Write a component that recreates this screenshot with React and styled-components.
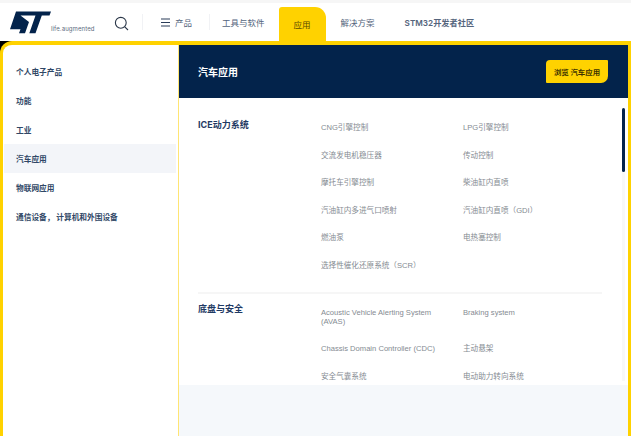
import React from 'react'
import styled, { createGlobalStyle } from 'styled-components'

const FONT = '"Inter", "Liberation Sans", "Noto Sans CJK SC", sans-serif'
const LINK_FONT = '"Liberation Sans", "Noto Sans CJK SC", sans-serif'

const GlobalStyle = createGlobalStyle`
  html, body {
    margin: 0;
    height: 100%;
    overflow: hidden;
    background: #fff;
    font-family: ${FONT};
  }
`

const Page = styled.div`
  width: 631px;
  height: 436px;
  display: flex;
  flex-direction: column;
  background: #000;
`

const TopBar = styled.header`
  height: 41px;
  box-sizing: border-box;
  border-top: 3px solid #f6f6f6;
  background: #fff;
  display: flex;
  align-items: stretch;
`

const Brand = styled.div`
  width: 142px;
  box-sizing: border-box;
  padding-left: 10px;
  display: flex;
  align-items: center;
`

const Tagline = styled.span`
  font-size: 6px;
  color: #5d6b80;
  margin: 13px 0 0 0;
  width: 44px;
  letter-spacing: 0.1px;
  white-space: nowrap;
`

const SearchBtn = styled.span`
  margin: 3px 0 0 19px;
  display: flex;
  color: #2a3648;
`

const Nav = styled.nav`
  display: flex;
  align-items: stretch;
`

const NavItem = styled.div`
  display: flex;
  align-items: center;
  gap: 5px;
  font-size: ${p => (p.$bold ? '8.2px' : '8.5px')};
  color: ${p => (p.$active ? '#5b4a00' : '#54647c')};
  background: ${p => (p.$active ? '#ffd200' : 'transparent')};
  margin-top: ${p => (p.$active ? '4px' : '0')};
  border-radius: ${p => (p.$active ? '3px 11px 0 0' : '0')};
  padding: ${p => p.$pad};
  font-weight: ${p => (p.$bold ? 600 : 400)};
  white-space: nowrap;
`

const NavDivider = styled.span`
  width: 1px;
  height: 16px;
  align-self: center;
  background: #f1f2f5;
`

const Panel = styled.div`
  flex: 1;
  min-height: 0;
  display: flex;
  box-sizing: border-box;
  background: #fff;
  border: 3px solid #ffd200;
  border-top-width: 4px;
  border-bottom: 0;
  border-radius: 12px 0 0 0;
`

const Side = styled.aside`
  width: 176px;
  flex-shrink: 0;
  box-sizing: border-box;
  padding: 12px 2px 0 1px;
  border-right: 1px solid #ffe574;
`

const SideItem = styled.div`
  height: 29px;
  box-sizing: border-box;
  padding-left: 12px;
  display: flex;
  align-items: center;
  font-size: 7.7px;
  font-weight: 700;
  color: #304766;
  background: ${p => (p.$active ? '#f3f5f9' : 'transparent')};
`

const Main = styled.main`
  flex: 1;
  min-width: 0;
  display: flex;
  flex-direction: column;
`

const Banner = styled.div`
  height: 53px;
  flex-shrink: 0;
  box-sizing: border-box;
  background: #03234b;
  display: flex;
  align-items: center;
  justify-content: space-between;
  padding: 0 20px 0 19px;
`

const BannerTitle = styled.h2`
  margin: 0;
  font-size: 10px;
  font-weight: 700;
  color: #fff;
`

const BrowseBtn = styled.button`
  height: 23px;
  width: 62px;
  padding: 0;
  border: 0;
  background: #ffd200;
  color: #3d3300;
  font-family: ${FONT};
  font-size: 7.4px;
  font-weight: 700;
  border-radius: 4px 1px 7px 1px;
  white-space: nowrap;
`

const Scroller = styled.div`
  height: 287px;
  flex-shrink: 0;
  overflow: hidden;
  position: relative;
  box-sizing: border-box;
  padding: 0 26px 0 19px;
`

const Track = styled.div`
  position: absolute;
  top: 10px;
  bottom: 4px;
  right: 3px;
  width: 3px;
  background: #f8f8f8;
`

const Thumb = styled.div`
  height: 64px;
  border-radius: 2px;
  background: #03234b;
`

const Section = styled.section`
  display: flex;
  padding: ${p => p.$pad};
  border-bottom: ${p => (p.$last ? '0' : '2px solid #f6f6f6')};
`

const SectionTitle = styled.h3`
  margin: ${p => p.$offset} 0 0;
  width: 123px;
  flex-shrink: 0;
  font-size: 9px;
  line-height: 12px;
  font-weight: 700;
  color: #1f3a64;
`

const LinkGrid = styled.div`
  display: grid;
  grid-template-columns: 142px 120px;
  row-gap: 17.5px;
  align-items: start;
`

const LinkItem = styled.a`
  font-family: ${LINK_FONT};
  font-size: 7.6px;
  line-height: 9.5px;
  color: #858b92;
  min-height: 10px;
  padding-right: 18px;
`

const Footer = styled.div`
  flex: 1;
  background: #f5f8fb;
`

const LogoMark = styled.svg`
  flex-shrink: 0;
  margin-right: -1px;
`

const Logo = () => (
  <LogoMark width="42" height="23" viewBox="0 0 42 23" fill="#03234b">
    <path d="M6 0.5H41L39.5 4.5H31.8L25.5 22.3H19.3L25.5 4.5H10.5L19 11L15 22.3H9L10.5 18.3H0Z" />
  </LogoMark>
)

const SearchIcon = () => (
  <svg width="15" height="15" viewBox="0 0 15 15" fill="none" stroke="currentColor" strokeWidth="1.1">
    <circle cx="6.8" cy="6.8" r="5.4" />
    <path d="M10.8 10.8L14 14" />
  </svg>
)

const MenuIcon = () => (
  <svg width="9" height="9" viewBox="0 0 9 9" stroke="#2a3c58" strokeWidth="1.2">
    <path d="M0 1H9M0 4.5H9M0 8H9" />
  </svg>
)

const sideItems = ['个人电子产品', '功能', '工业', '汽车应用', '物联网应用', '通信设备， 计算机和外围设备']

const iceLinks = [
  'CNG引擎控制', 'LPG引擎控制',
  '交流发电机稳压器', '传动控制',
  '摩托车引擎控制', '柴油缸内直喷',
  '汽油缸内多进气口喷射', '汽油缸内直喷（GDI）',
  '燃油泵', '电热塞控制',
  '选择性催化还原系统（SCR）',
]

const chassisLinks = [
  'Acoustic Vehicle Alerting System (AVAS)', 'Braking system',
  'Chassis Domain Controller (CDC)', '主动悬架',
  '安全气囊系统', '电动助力转向系统',
]

export default function App() {
  return (
    <Page>
      <GlobalStyle />
      <TopBar>
        <Brand>
          <Logo />
          <Tagline>life.augmented</Tagline>
          <SearchBtn><SearchIcon /></SearchBtn>
        </Brand>
        <Nav>
          <NavDivider />
          <NavItem $pad="0 17px 0 18px"><MenuIcon />产品</NavItem>
          <NavDivider />
          <NavItem $pad="0 14px 0 12px">工具与软件</NavItem>
          <NavItem $active $pad="0 15px">应用</NavItem>
          <NavItem $pad="0 30px 0 15px">解决方案</NavItem>
          <NavItem $bold>STM32开发者社区</NavItem>
        </Nav>
      </TopBar>
      <Panel>
        <Side>
          {sideItems.map(item => (
            <SideItem key={item} $active={item === '汽车应用'}>{item}</SideItem>
          ))}
        </Side>
        <Main>
          <Banner>
            <BannerTitle>汽车应用</BannerTitle>
            <BrowseBtn>浏览 汽车应用</BrowseBtn>
          </Banner>
          <Scroller>
            <Track><Thumb /></Track>
            <Section $pad="25px 0 21px">
              <SectionTitle $offset="-4px">ICE动力系统</SectionTitle>
              <LinkGrid>
                {iceLinks.map(l => <LinkItem key={l}>{l}</LinkItem>)}
              </LinkGrid>
            </Section>
            <Section $last $pad="14px 0 0">
              <SectionTitle $offset="-5px">底盘与安全</SectionTitle>
              <LinkGrid>
                {chassisLinks.map(l => <LinkItem key={l}>{l}</LinkItem>)}
              </LinkGrid>
            </Section>
          </Scroller>
          <Footer />
        </Main>
      </Panel>
    </Page>
  )
}
